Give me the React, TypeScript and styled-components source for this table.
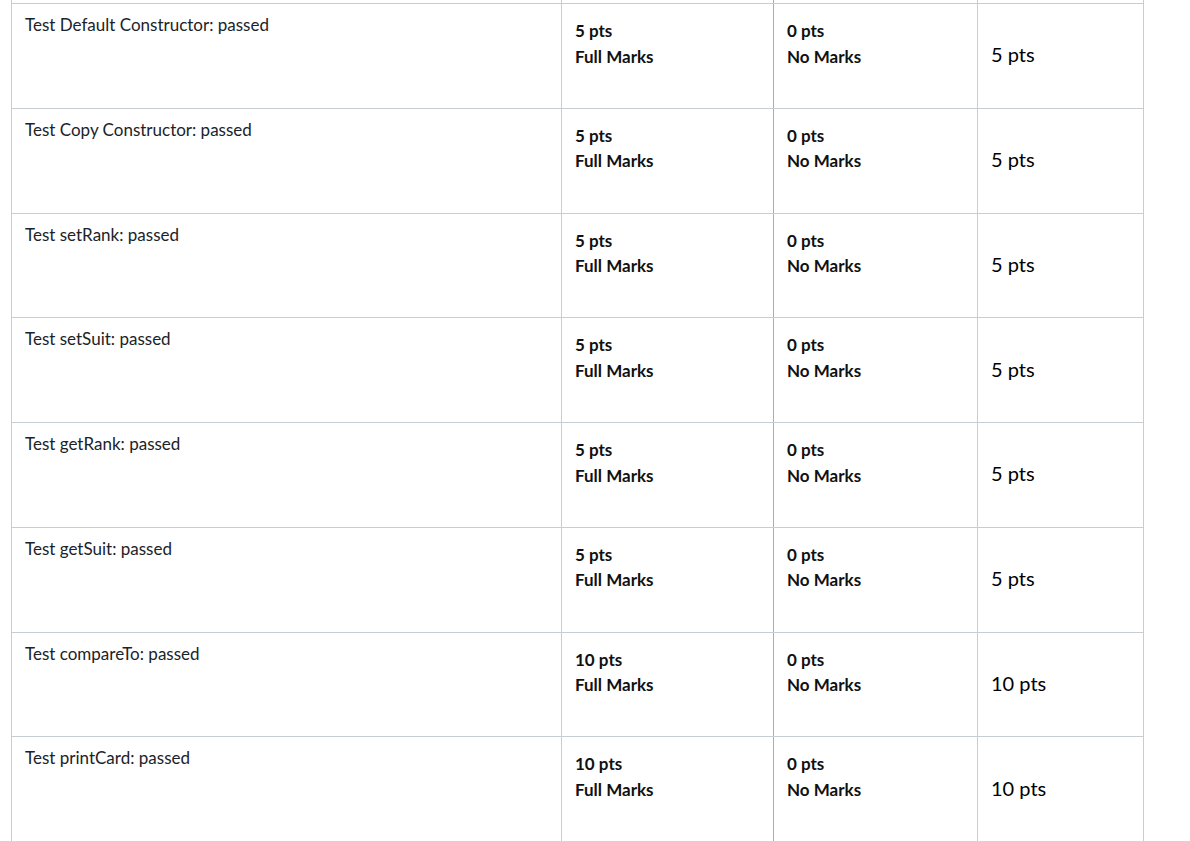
import styled, { createGlobalStyle } from 'styled-components';

interface CriterionTypes {
  description: string;
  points: number;
}

const criteria: CriterionTypes[] = [
  { description: 'Test Default Constructor: passed', points: 5 },
  { description: 'Test Copy Constructor: passed', points: 5 },
  { description: 'Test setRank: passed', points: 5 },
  { description: 'Test setSuit: passed', points: 5 },
  { description: 'Test getRank: passed', points: 5 },
  { description: 'Test getSuit: passed', points: 5 },
  { description: 'Test compareTo: passed', points: 10 },
  { description: 'Test printCard: passed', points: 10 },
];

const GlobalStyle = createGlobalStyle`
  body {
    margin: 0;
    background: #ffffff;
    color: #000000;
    font-family: Lato, 'Open Sans', sans-serif;
  }
`;

const Page = styled.div`
  width: 1190px;
  height: 841px;
  overflow: hidden;
  padding-left: 11px;
  box-sizing: border-box;
`;

const Rubric = styled.div`
  width: 1131px;
  border-left: 1px solid #c7cdd1;
  border-right: 1px solid #c7cdd1;
`;

const Row = styled.div<{ $height: number }>`
  display: grid;
  grid-template-columns: 549px 416px 1fr;
  height: ${({ $height }) => $height}px;
  border-bottom: 1px solid #c7cdd1;
  box-sizing: border-box;
`;

const Description = styled.div`
  padding: 8px 13px;
  font-size: 17px;
  line-height: 25px;
  color: #1b2329;
`;

const Ratings = styled.div`
  display: grid;
  grid-template-columns: 211px 1fr;
  border-left: 1px solid #c7cdd1;
`;

const Rating = styled.div<{ $divided?: boolean }>`
  padding: 14px 13px;
  font-size: 17px;
  font-weight: 700;
  line-height: 25.5px;
  color: #111111;
  border-left: ${({ $divided }) => ($divided ? '1px solid #a5afb5' : 'none')};
`;

const Spacer = styled.div<{ $divided?: boolean }>`
  border-left: ${({ $divided }) => ($divided ? '1px solid #a5afb5' : 'none')};
`;

const Points = styled.div`
  display: flex;
  align-items: center;
  padding: 0 13px 3px;
  font-size: 20px;
  border-left: 1px solid #c7cdd1;
  color: #000000;
`;

const App = () => {
  return (
    <Page>
      <GlobalStyle />
      <Rubric>
        <Row $height={4}>
          <div />
          <Ratings>
            <Spacer />
            <Spacer $divided />
          </Ratings>
          <Points />
        </Row>
        {criteria.map(({ description, points }) => (
          <Row key={description} $height={104.75}>
            <Description>{description}</Description>
            <Ratings>
              <Rating>
                <div>{points} pts</div>
                <div>Full Marks</div>
              </Rating>
              <Rating $divided>
                <div>0 pts</div>
                <div>No Marks</div>
              </Rating>
            </Ratings>
            <Points>{points} pts</Points>
          </Row>
        ))}
      </Rubric>
    </Page>
  );
};

export default App;
